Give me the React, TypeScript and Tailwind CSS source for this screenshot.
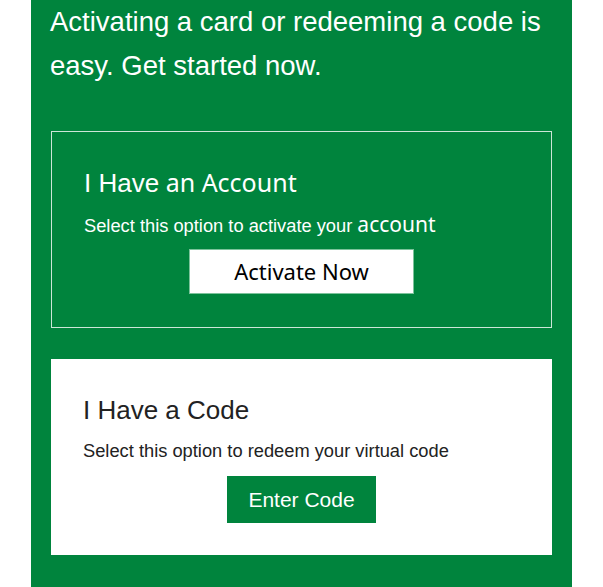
import React from 'react'

const arial = "font-['Liberation_Sans',Arial,sans-serif]"
const segoe = "font-['Noto_Sans','Open_Sans',sans-serif]"

export default function App() {
  return (
    <div className="min-h-[587px] bg-white">
      <div className="ml-[31px] w-[541px] min-h-[587px] bg-[#00843d] px-[20px] pb-10">
        <h1 className={`${arial} -ml-[1px] text-[27.5px] leading-[44px] text-white`}>
          Activating a card or redeeming a code is easy. Get started now.
        </h1>

        <div className="mt-[43px] border border-white/80 px-[32px] pt-[34px] pb-[33px]">
          <h2 className="text-[26px] leading-[32px] text-white">
            <span className={arial}>I Have</span>
            <span className={`${segoe} text-[25px] leading-[32px]`}> an Account</span>
          </h2>
          <p className="mt-[13px] text-[18.3px] leading-[24px] text-white">
            <span className={arial}>Select this option to activate your </span>
            <span className={`${segoe} text-[21px] leading-[24px]`}>account</span>
          </p>
          <div className="mt-[11px] flex justify-center">
            <button
              className={`${segoe} h-[45px] w-[225px] border border-[#7cc39b] bg-white text-[22px] text-black`}
            >
              Activate Now
            </button>
          </div>
        </div>

        <div className="mt-[31px] border border-white/70 bg-white px-[31px] pt-[34px] pb-[31px]">
          <h2 className={`${arial} text-[26px] leading-[32px] text-[#222]`}>I Have a Code</h2>
          <p className={`${arial} mt-[13px] text-[18.3px] leading-[24px] text-[#222]`}>
            Select this option to redeem your virtual code
          </p>
          <div className="mt-[13px] flex justify-center">
            <button className={`${arial} h-[47px] w-[149px] bg-[#00843d] text-[21px] text-white`}>
              Enter Code
            </button>
          </div>
        </div>
      </div>
    </div>
  )
}
